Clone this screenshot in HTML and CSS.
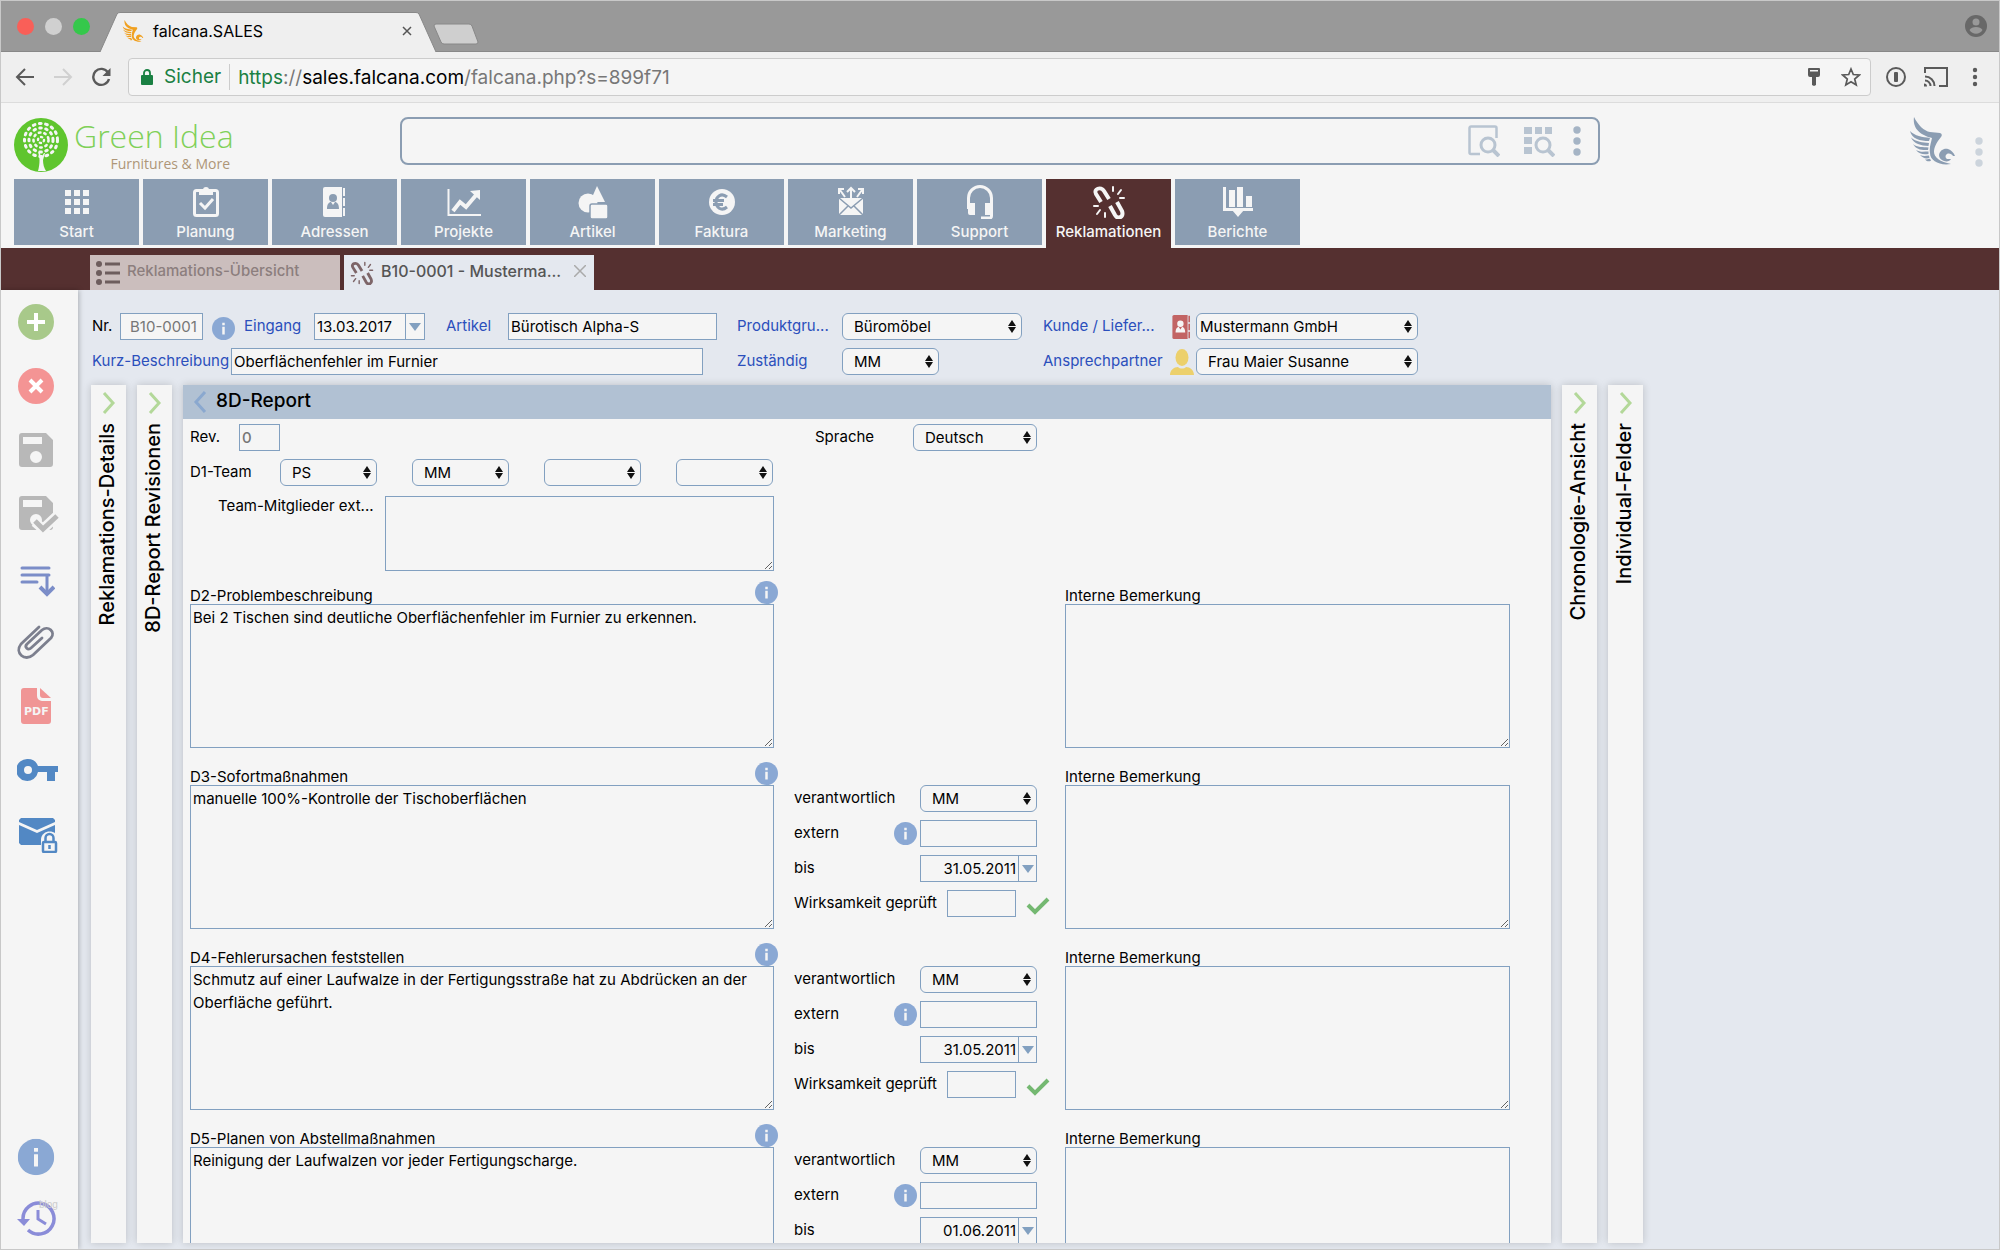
FILE: index.html
```html
<!DOCTYPE html>
<html lang="de">
<head>
    <meta charset="utf-8">
    <title>falcana.SALES</title>
    <link rel="stylesheet" href="styles.css">
</head>
<body>
    <!-- shared icons -->
    <svg class="defs" width="0" height="0">
        <symbol id="i-info" viewBox="0 0 24 24"><circle cx="12" cy="12" r="12"/><path fill="#f5f5f5" d="M10.700 6h2.600v2.600h-2.600zM10.700 10.200h2.600v8h-2.600z"/></symbol>
        <symbol id="i-falcon" viewBox="0 0 45 48"><path d="M4 0C8 8 14 14 20 15L30 16Q33 17 31 20C26 26 24 31 24 35C24 40 30 45 41 47C30 49 20 44 20 36C19 31 21 26 22 21C14 19 2 14 4 0z"/><path d="M0 14C5 19 12 20 20 21L19 24C10 24 2 22 0 14zM1 20.500C6 25 13 25.500 19 26L18.500 29C11 28.500 4 27 1 20.500zM3 27C7 30.500 13 30 18.500 30.500L18 33C12 33.500 6 32.500 3 27zM6 33c4 2.500 8 1.500 12.500 1.500l0 2.500c-5 1-9.500 0-12.500-4zM10 38c3 1.500 6 1 9 .5l.5 2.500c-4 1-6.500 0-9.500-3zM15 42.500c2 0 3-.5 5-.8l1 2c-2 1-4 1-6-1.200z"/><path d="M29 38C30 33 34 31 38 32C41 33 44 36 45 39L43 39C42 37 39 36 37 37C35 38 35 41 37 42L41 42C40 44 37 45 34 44C31 43 29 41 29 38z"/></symbol>
        <symbol id="i-link" viewBox="0 0 34 34"><g fill="none" stroke="currentColor" stroke-width="4"><path d="M17 14L12 6C9 1 1 4 4 9l5 8"/><path d="M18 21l5 9c3 5 9 2 7-4l-5-9"/></g><g stroke="currentColor" stroke-width="2" stroke-linecap="round"><path d="M21 2v4M29 5l-3 4M28 13h4M2 21h4M8 25l-3 4M13 28v4"/></g></symbol>
        <symbol id="i-contact" viewBox="0 0 24 30"><path d="M2 0h17v30H2a2 2 0 0 1-2-2V2a2 2 0 0 1 2-2z"/><path d="M20 1h2v8h-2zM20 11h2v8h-2zM20 21h2v8h-2z"/><g class="cut"><circle cx="10" cy="11" r="4"/><path d="M4 22c0-5 2-7 4-7l2 3 2-3c2 0 4 2 4 7z"/></g></symbol>
        <symbol id="i-disk" viewBox="0 0 34 34"><path fill-rule="evenodd" d="M3 0h24l7 7v24a3 3 0 0 1-3 3H3a3 3 0 0 1-3-3V3a3 3 0 0 1 3-3zM4 4v7h19V4zM17 18a6 6 0 1 0 0 12 6 6 0 0 0 0-12z"/></symbol>
        <symbol id="i-next" viewBox="0 0 14 22"><path fill="none" stroke="currentColor" stroke-width="3" d="M2 1l9 10-9 10"/></symbol>
        <symbol id="i-check" viewBox="0 0 24 18"><path fill="none" stroke="currentColor" stroke-width="4" d="M2 8l7 7L22 2"/></symbol>
    </svg>

    <!-- browser window -->
    <div class="titlebar">
        <span class="light red"></span><span class="light grey"></span><span class="light green"></span>
        <div class="browser-tab">
            <svg class="tab-shape" viewBox="0 0 336 40" preserveAspectRatio="none"><path fill="#efefef" stroke="#888" d="M0 40L17 2Q18 .5 20 .5H316Q318 .500 319 2L336 40"/></svg>
            <svg class="favicon"><use href="#i-falcon"/></svg>
            <span class="tab-name">falcana.SALES</span>
            <svg class="tab-close" viewBox="0 0 10 10"><path stroke="#555" stroke-width="1.500" d="M1 1l8 8M9 1L1 9"/></svg>
        </div>
        <svg class="new-tab" viewBox="0 0 46 22"><path fill="#cfcfcf" stroke="#888" d="M3 1h33q2 0 3 2l6 16q0 2-2 2H11q-2 0-3-2L1 3q0-2 2-2z"/></svg>
        <svg class="profile" viewBox="0 0 22 22"><circle cx="11" cy="11" r="11" fill="#686868"/><circle cx="11" cy="7" r="3.500" fill="#999"/><path fill="#999" d="M4.500 15c2-4 11-4 13 0-3 5-10 5-13 0z"/></svg>
    </div>
    <div class="toolbar">
        <svg class="tool-icon" viewBox="0 0 20 20"><path fill="none" stroke="#5a5a5a" stroke-width="2" d="M19 10H3M10 2l-8 8 8 8"/></svg>
        <svg class="tool-icon" viewBox="0 0 20 20"><path fill="none" stroke="#d0d0d0" stroke-width="2" d="M1 10h16M10 2l8 8-8 8"/></svg>
        <svg class="tool-icon" viewBox="0 0 20 20"><path fill="none" stroke="#5a5a5a" stroke-width="2.400" d="M17 5.500A8 8 0 1 0 18 12"/><path fill="#5a5a5a" d="M19.500 1v8h-8z"/></svg>
        <div class="omnibox">
            <svg class="lock" viewBox="0 0 12 16"><path fill="#1a8043" d="M1 6h10a1 1 0 0 1 1 1v8a1 1 0 0 1-1 1H1a1 1 0 0 1-1-1V7a1 1 0 0 1 1-1z"/><path fill="none" stroke="#1a8043" stroke-width="1.800" d="M3 7V4a3 3 0 0 1 6 0v3"/></svg>
            <span class="secure">Sicher</span>
            <span class="url"><span class="scheme">https</span>://<b>sales.falcana.com</b>/falcana.php?s=899f71</span>
            <svg class="box-icon" viewBox="0 0 20 20"><path fill="#5a5a5a" fill-rule="evenodd" d="M5 1h10a1 1 0 0 1 1 1v6a2 2 0 0 1-2 2h-2v8l-2 1-2-1v-8H6a2 2 0 0 1-2-2V2a1 1 0 0 1 1-1zM6 3v1.500h8V3z"/></svg>
            <svg class="box-icon" viewBox="0 0 20 20"><path fill="none" stroke="#5a5a5a" stroke-width="1.700" d="M10 2l2.300 5.500 6 .5-4.600 4 1.500 6-5.200-3.300L4.800 18l1.500-6-4.600-4 6-.5z"/></svg>
        </div>
        <svg class="tool-icon" viewBox="0 0 20 20"><circle cx="10" cy="10" r="9" fill="none" stroke="#5a5a5a" stroke-width="2"/><rect x="8" y="5" width="4" height="10" rx="1" fill="#5a5a5a"/></svg>
        <svg class="cast" viewBox="0 0 24 20"><path fill="none" stroke="#5a5a5a" stroke-width="2" d="M1 6V1h22v18h-8M1 9.500a9.500 9.500 0 0 1 9.500 9.500M1 13.500a5.500 5.500 0 0 1 5.500 5.500"/><path fill="#5a5a5a" d="M0 16.500a3 3 0 0 1 3 3H0z"/></svg>
        <svg class="dots-small" viewBox="0 0 6 20"><g fill="#5a5a5a"><circle cx="3" cy="3" r="2.200"/><circle cx="3" cy="10" r="2.200"/><circle cx="3" cy="17" r="2.200"/></g></svg>
    </div>

    <header>
        <div class="brand-row">
            <a class="logo" href="#">
                <svg class="tree" viewBox="0 0 54 54"><circle cx="27" cy="27" r="27" fill="#5fc52e"/><path fill="#f5f5f5" d="M24 53c2-8 2-13 0-19l2 1 1 5 3-5h1l-2 7c0 4 1 8 3 11z"/>
                    <g fill="none" stroke="#f5f5f5" stroke-linecap="round"><circle cx="27" cy="22" r="16.500" stroke-width="3" stroke-dasharray="1.800 4.500"/><circle cx="27" cy="22" r="12" stroke-width="3" stroke-dasharray="1.600 4.500"/><circle cx="27" cy="22" r="7.500" stroke-width="2.600" stroke-dasharray="1.500 4"/><circle cx="27" cy="22" r="3" stroke-width="2.400" stroke-dasharray="1.200 3.400"/></g></svg>
                <span class="wordmark"><span class="brand">Green Idea</span><span class="slogan">Furnitures &amp; More</span></span>
            </a>
            <div class="search">
                <input type="text" aria-label="Suche">
                <svg class="search-icon" viewBox="0 0 32 32"><path fill="none" stroke="#b8c4d1" stroke-width="2.500" d="M12 29H3a1.500 1.500 0 0 1-1.500-1.500V3A1.500 1.500 0 0 1 3 1.500h24A1.500 1.500 0 0 1 28.500 3v10"/><circle cx="20" cy="20" r="7" fill="none" stroke="#b8c4d1" stroke-width="3"/><path stroke="#b8c4d1" stroke-width="4" d="M25 25l6 6"/></svg>
                <svg class="search-icon" viewBox="0 0 32 32"><path fill="#b8c4d1" d="M1 2h8v7H1zM12 2h7v7h-7zM22 2h7v7h-7zM1 12h8v7H1zM1 22h8v7H1z"/><circle cx="20" cy="20" r="9" fill="#f5f5f5"/><circle cx="20" cy="20" r="7" fill="none" stroke="#b8c4d1" stroke-width="3"/><path stroke="#b8c4d1" stroke-width="4" d="M25 25l6 6"/></svg>
                <svg class="dots" viewBox="0 0 8 30"><g fill="#a5b4c5"><circle cx="4" cy="4" r="3.700"/><circle cx="4" cy="15" r="3.700"/><circle cx="4" cy="26" r="3.700"/></g></svg>
            </div>
            <svg class="falcon"><use href="#i-falcon"/></svg>
            <svg class="dots side" viewBox="0 0 8 30"><g fill="#ccd4dc"><circle cx="4" cy="4" r="3.700"/><circle cx="4" cy="15" r="3.700"/><circle cx="4" cy="26" r="3.700"/></g></svg>
        </div>
        <nav>
            <a href="#"><svg viewBox="0 0 34 34"><path d="M5 5h6v6H5zM14 5h6v6h-6zM23 5h6v6h-6zM5 14h6v6H5zM14 14h6v6h-6zM23 14h6v6h-6zM5 23h6v6H5zM14 23h6v6h-6zM23 23h6v6h-6z"/></svg>Start</a>
            <a href="#"><svg viewBox="0 0 34 34"><rect x="5.500" y="5.500" width="23" height="25" rx="2" fill="none" stroke="currentColor" stroke-width="3"/><path d="M10 5h4a3 3 0 0 1 6 0h4v5H10z"/><path fill="none" stroke="currentColor" stroke-width="3" d="M11 18l5 5 8-9"/></svg>Planung</a>
            <a href="#"><svg viewBox="-5 -2 34 34"><use href="#i-contact" width="24" height="30"/></svg>Adressen</a>
            <a href="#"><svg viewBox="0 0 34 34"><path fill="none" stroke="currentColor" stroke-width="2" d="M1.500 4v26H34"/><path fill="none" stroke="currentColor" stroke-width="4" d="M6 26l7-9 6 5L30 9"/><path d="M33 5v10L23 6z"/></svg>Projekte</a>
            <a href="#"><svg viewBox="0 0 34 34"><path d="M21 1l8 16H14z"/><circle cx="12" cy="18" r="9.500"/><rect x="14" y="19" width="18" height="15" rx="2" stroke="#8b9db2" stroke-width="1.500"/></svg>Artikel</a>
            <a href="#"><svg viewBox="0 0 34 34"><circle cx="17" cy="17" r="13"/><path fill="none" stroke="#8b9db2" stroke-width="3" d="M22 12c-6-5-11 0-11 5s5 10 11 5M8 15.500h11M8 19.500h10"/></svg>Faktura</a>
            <a href="#"><svg viewBox="0 0 34 34"><path d="M5 13h24v17H5z"/><path fill="none" stroke="#8b9db2" stroke-width="1.500" d="M5 13l12 10 12-10M5 30l9-9M29 30l-9-9"/><path fill="none" stroke="currentColor" stroke-width="2" d="M11 12L6 5M17 13V4M23 12l5-7M5 9V4h5M13 7l4-4 4 4M24 4h5v5"/></svg>Marketing</a>
            <a href="#"><svg viewBox="0 0 34 34"><path fill="none" stroke="currentColor" stroke-width="3" d="M5.500 24V13a11.500 11.500 0 0 1 23 0v18a2 2 0 0 1-2 2H18"/><path d="M5 18h7v12H7a2 2 0 0 1-2-2zM22 18h7v12h-7z"/></svg>Support</a>
            <a href="#" class="active"><svg viewBox="0 0 34 34"><use href="#i-link"/></svg>Reklamationen</a>
            <a href="#"><svg viewBox="0 0 34 34"><path fill="none" stroke="currentColor" stroke-width="3" d="M3.500 2v22.500H32"/><path d="M8 5h6v17H8zM16 2h6v20h-6zM25 11h6v11h-6zM11 25h12l-6 7z"/></svg>Berichte</a>
        </nav>
    </header>

    <div class="tab-band">
        <a class="doc-tab" href="#"><svg viewBox="0 0 24 24"><g fill="#6d5d5d"><circle cx="3" cy="3" r="3"/><circle cx="3" cy="12" r="3"/><circle cx="3" cy="21" r="3"/><path d="M9 1.500h15v3H9zM9 10.500h15v3H9zM9 19.500h15v3H9z"/></g></svg><span>Reklamations-Übersicht</span></a>
        <a class="doc-tab current" href="#"><svg viewBox="0 0 34 34"><use href="#i-link"/></svg><span>B10-0001 - Musterma...</span><svg class="x" viewBox="0 0 12 12"><path stroke="#aaa" stroke-width="1.500" d="M0 0l12 12M12 0L0 12"/></svg></a>
    </div>

    <div class="page">
        <aside>
            <button title="Neu"><svg viewBox="0 0 38 38"><circle cx="19" cy="19" r="18" fill="#a8c98a"/><path stroke="#fff" stroke-width="4" d="M19 10v18M10 19h18"/></svg></button>
            <button title="Löschen"><svg viewBox="0 0 38 38"><circle cx="19" cy="19" r="18" fill="#f49494"/><path stroke="#fff" stroke-width="4" d="M13 13l12 12M25 13L13 25"/></svg></button>
            <button title="Speichern"><svg viewBox="0 0 38 38" fill="#b8b8b8"><use href="#i-disk" x="2" y="2" width="34" height="34"/></svg></button>
            <button title="Speichern und schließen"><svg class="wide" viewBox="0 0 42 38" fill="#b8b8b8"><use href="#i-disk" x="2" y="1" width="34" height="34"/><path fill="none" stroke="#f5f5f5" stroke-width="10" d="M18 27l8 7 14-13"/><path fill="none" stroke="#b8b8b8" stroke-width="5" d="M18 26l8 8 14-13"/></svg></button>
            <button title="Sortieren"><svg viewBox="0 0 38 38"><path fill="none" stroke="#7b8dc8" stroke-width="3" stroke-linecap="round" d="M5 9h27M5 16h27M5 23h15M30 17v17"/><path fill="none" stroke="#7b8dc8" stroke-width="4" d="M23 28l7 7 7-7"/></svg></button>
            <button title="Anhang"><svg viewBox="0 0 38 38"><path fill="none" stroke="#7c7f8e" stroke-width="2.800" stroke-linecap="round" stroke-linejoin="round" d="M25 15L14 25c-3 3-7-1-4-4L25 7c6-5 14 2 9 8L16 32c-8 7-19-2-12-11L22 4"/></svg></button>
            <button title="PDF"><svg viewBox="0 0 38 38"><path fill="#f09595" d="M7 1h13v8a5 5 0 0 0 5 5h9v20a3 3 0 0 1-3 3H7a3 3 0 0 1-3-3V4a3 3 0 0 1 3-3z"/><path fill="#f09595" d="M23 1l11 10h-8a3 3 0 0 1-3-3z"/><text class="pdf" x="7" y="28">PDF</text></svg></button>
            <button title="Rechte"><svg class="wide" viewBox="0 0 42 38"><path fill="#5288c4" fill-rule="evenodd" d="M11 8a11 11 0 0 1 10 7h20v6h-3v9h-8v-9h-9a11 11 0 1 1-10-13zM11 15a4 4 0 1 0 0 8 4 4 0 0 0 0-8z"/></svg></button>
            <button title="E-Mail"><svg class="wide" viewBox="0 0 42 38"><path fill="#5288c4" d="M4 3h32l2 2v2L20 15 2 7V5zM2 10l18 8 18-8v20H4l-2-2z"/><path fill="#f5f5f5" d="M24 38V24c1-10 16-10 18 0v14z"/><rect x="26" y="27" width="13" height="10" rx="1" fill="none" stroke="#5288c4" stroke-width="2.500"/><path fill="none" stroke="#5288c4" stroke-width="2.500" d="M28.500 27v-4a4 4 0 0 1 8 0v4M32.500 30v4"/></svg></button>
            <button title="Info" class="push"><svg viewBox="-.500 -.500 25 25" fill="#8aa8d4"><use href="#i-info" width="24" height="24"/></svg></button>
            <button title="Verlauf" class="last"><svg class="wide" viewBox="0 0 42 38"><path fill="none" stroke="#8a8cd8" stroke-width="3.500" d="M6 19A15.500 15.500 0 1 1 11 30"/><path fill="#8a8cd8" d="M0 19h13l-6 7z"/><path fill="none" stroke="#8a8cd8" stroke-width="3" d="M21 10v9l8 5"/></svg><span class="blog">blog</span></button>
        </aside>

        <main>
            <form class="head-form">
                <div class="col-a">
                    <div class="line">
                        <label class="nr-label" for="nr">Nr.</label><input class="nr" id="nr" value="B10-0001" readonly>
                        <svg class="info"><use href="#i-info"/></svg>
                        <label class="blue eingang" for="eingang">Eingang</label>
                        <span class="date"><input id="eingang" value="13.03.2017"><button type="button" aria-label="Kalender"></button></span>
                        <label class="blue artikel" for="artikel">Artikel</label><input class="art" id="artikel" value="Bürotisch Alpha-S">
                    </div>
                    <div class="line">
                        <label class="blue kurz-label" for="kurz">Kurz-Beschreibung</label><input class="kurz" id="kurz" value="Oberflächenfehler im Furnier">
                    </div>
                </div>
                <div class="col-b">
                    <div class="line">
                        <label class="blue" for="produkt">Produktgru...</label>
                        <span class="select wide"><select id="produkt"><option>Büromöbel</option></select></span>
                    </div>
                    <div class="line">
                        <label class="blue" for="zust">Zuständig</label>
                        <span class="select"><select id="zust"><option>MM</option></select></span>
                    </div>
                </div>
                <div class="col-c">
                    <div class="line">
                        <label class="blue" for="kunde">Kunde / Liefer...</label>
                        <svg class="contact"><use href="#i-contact"/></svg>
                        <span class="select tight"><select id="kunde"><option>Mustermann GmbH</option></select></span>
                    </div>
                    <div class="line">
                        <label class="blue" for="partner">Ansprechpartner</label>
                        <svg class="person" viewBox="0 0 24 26"><ellipse cx="12" cy="8.500" rx="6.500" ry="8.500"/><path d="M0 26c0-5 4-8 8-8 2 2 6 2 8 0 4 0 8 3 8 8z"/></svg>
                        <span class="select"><select id="partner"><option>Frau Maier Susanne</option></select></span>
                    </div>
                </div>
            </form>

            <div class="panels">
                <section class="strip"><svg><use href="#i-next"/></svg><h2>Reklamations-Details</h2></section>
                <section class="strip"><svg><use href="#i-next"/></svg><h2>8D-Report Revisionen</h2></section>

                <section class="report">
                    <div class="report-title"><svg viewBox="0 0 14 22"><path fill="none" stroke="#8aa8cf" stroke-width="3" d="M12 1L3 11l9 10"/></svg><h1>8D-Report</h1></div>
                    <form class="report-form">
                        <div class="line">
                            <label class="rev-label" for="rev">Rev.</label><input class="rev" id="rev" value="0" readonly>
                            <label class="lang-label" for="sprache">Sprache</label>
                            <span class="select lang"><select id="sprache"><option>Deutsch</option></select></span>
                        </div>
                        <div class="line team">
                            <label for="team1">D1-Team</label>
                            <span class="select"><select id="team1"><option>PS</option></select></span>
                            <span class="select"><select aria-label="Team 2"><option>MM</option></select></span>
                            <span class="select"><select aria-label="Team 3"><option></option></select></span>
                            <span class="select"><select aria-label="Team 4"><option></option></select></span>
                        </div>
                        <div class="extern-team">
                            <label for="teamext">Team-Mitglieder ext...</label>
                            <textarea id="teamext"></textarea>
                        </div>

                        <div class="step">
                            <div class="text">
                                <div class="caption"><label for="d2">D2-Problembeschreibung</label><svg class="info"><use href="#i-info"/></svg></div>
                                <textarea id="d2">Bei 2 Tischen sind deutliche Oberflächenfehler im Furnier zu erkennen.</textarea>
                            </div>
                            <div class="resp"></div>
                            <div class="note">
                                <div class="caption"><label for="n2">Interne Bemerkung</label></div>
                                <textarea id="n2"></textarea>
                            </div>
                        </div>

                        <div class="step">
                            <div class="text">
                                <div class="caption"><label for="d3">D3-Sofortmaßnahmen</label><svg class="info"><use href="#i-info"/></svg></div>
                                <textarea id="d3">manuelle 100%-Kontrolle der Tischoberflächen</textarea>
                            </div>
                            <div class="resp">
                                <div class="line"><label for="v3">verantwortlich</label><span class="select"><select id="v3"><option>MM</option></select></span></div>
                                <div class="line"><label for="e3">extern</label><svg class="info"><use href="#i-info"/></svg><input id="e3"></div>
                                <div class="line"><label for="b3">bis</label><span class="date"><input id="b3" value="31.05.2011"><button type="button" aria-label="Kalender"></button></span></div>
                                <div class="line"><label class="checked" for="w3">Wirksamkeit geprüft</label><input class="sign" id="w3"><svg class="ok"><use href="#i-check"/></svg></div>
                            </div>
                            <div class="note">
                                <div class="caption"><label for="n3">Interne Bemerkung</label></div>
                                <textarea id="n3"></textarea>
                            </div>
                        </div>

                        <div class="step">
                            <div class="text">
                                <div class="caption"><label for="d4">D4-Fehlerursachen feststellen</label><svg class="info"><use href="#i-info"/></svg></div>
                                <textarea id="d4">Schmutz auf einer Laufwalze in der Fertigungsstraße hat zu Abdrücken an der Oberfläche geführt.</textarea>
                            </div>
                            <div class="resp">
                                <div class="line"><label for="v4">verantwortlich</label><span class="select"><select id="v4"><option>MM</option></select></span></div>
                                <div class="line"><label for="e4">extern</label><svg class="info"><use href="#i-info"/></svg><input id="e4"></div>
                                <div class="line"><label for="b4">bis</label><span class="date"><input id="b4" value="31.05.2011"><button type="button" aria-label="Kalender"></button></span></div>
                                <div class="line"><label class="checked" for="w4">Wirksamkeit geprüft</label><input class="sign" id="w4"><svg class="ok"><use href="#i-check"/></svg></div>
                            </div>
                            <div class="note">
                                <div class="caption"><label for="n4">Interne Bemerkung</label></div>
                                <textarea id="n4"></textarea>
                            </div>
                        </div>

                        <div class="step">
                            <div class="text">
                                <div class="caption"><label for="d5">D5-Planen von Abstellmaßnahmen</label><svg class="info"><use href="#i-info"/></svg></div>
                                <textarea id="d5">Reinigung der Laufwalzen vor jeder Fertigungscharge.</textarea>
                            </div>
                            <div class="resp">
                                <div class="line"><label for="v5">verantwortlich</label><span class="select"><select id="v5"><option>MM</option></select></span></div>
                                <div class="line"><label for="e5">extern</label><svg class="info"><use href="#i-info"/></svg><input id="e5"></div>
                                <div class="line"><label for="b5">bis</label><span class="date"><input id="b5" value="01.06.2011"><button type="button" aria-label="Kalender"></button></span></div>
                            </div>
                            <div class="note">
                                <div class="caption"><label for="n5">Interne Bemerkung</label></div>
                                <textarea id="n5"></textarea>
                            </div>
                        </div>
                    </form>
                </section>

                <section class="strip"><svg><use href="#i-next"/></svg><h2>Chronologie-Ansicht</h2></section>
                <section class="strip"><svg><use href="#i-next"/></svg><h2>Individual-Felder</h2></section>
            </div>
        </main>
    </div>
</body>
</html>
```
FILE: styles.css
```css
* {
    box-sizing: border-box;
}

body {
    margin: 0;
    height: 100vh;
    display: flex;
    flex-direction: column;
    overflow: hidden;
    border: 1px solid #c8c8c8;
    background-color: #f5f5f5;
    color: #000;
    font-family: Inter, "Open Sans", sans-serif;
    font-size: 15px;
}

svg {
    display: block;
    flex: none;
}

.defs {
    position: absolute;
}

a {
    text-decoration: none;
}

/* Browser title bar */
.titlebar {
    display: flex;
    align-items: center;
    height: 51px;
    padding: 0 12px 0 16px;
    background-color: #999;
    border-bottom: 1px solid #888;
}

.light {
    width: 17px;
    height: 17px;
    margin-right: 11px;
    border-radius: 50%;
}

.red { background-color: #f95f58; }
.grey { background-color: #d0d0d0; }
.green { background-color: #35c84b; }

.browser-tab {
    position: relative;
    display: flex;
    align-items: center;
    align-self: flex-end;
    width: 336px;
    height: 40px;
    margin-left: -1px;
    margin-bottom: -1px;
    padding: 0 24px 2px 22px;
}

.tab-shape {
    position: absolute;
    left: 0;
    top: 0;
    width: 100%;
    height: 100%;
}

.favicon {
    position: relative;
    width: 22px;
    height: 22px;
    fill: #f0a020;
}

.tab-name {
    position: relative;
    flex: 1;
    padding-left: 9px;
    font-size: 16px;
}

.tab-close {
    position: relative;
    width: 10px;
    height: 10px;
}

.new-tab {
    width: 46px;
    height: 22px;
    margin: 16px 0 0 -3px;
}

.profile {
    width: 22px;
    height: 22px;
    margin-left: auto;
}

/* Browser toolbar */
.toolbar {
    display: flex;
    align-items: center;
    gap: 18px;
    height: 51px;
    padding: 0 21px 0 14px;
    background-color: #efefef;
    border-bottom: 1px solid #dcdcdc;
}

.tool-icon {
    width: 20px;
    height: 20px;
}

.cast {
    width: 24px;
    height: 20px;
}

.dots-small {
    width: 6px;
    height: 20px;
    margin-left: 6px;
}

.omnibox {
    display: flex;
    align-items: center;
    flex: 1;
    height: 38px;
    margin-left: -1px;
    margin-right: -3px;
    padding: 0 9px 0 12px;
    border: 1px solid #ccc;
    border-radius: 4px;
    background-color: #f5f5f5;
    font-size: 19px;
}

.lock {
    width: 12px;
    height: 16px;
}

.secure {
    margin-left: 11px;
    padding-right: 8px;
    border-right: 1px solid #ccc;
    line-height: 26px;
    color: #1a8043;
}

.url {
    flex: 1;
    padding-left: 8px;
    color: #777;
}

.url .scheme {
    color: #1a8043;
}

.url b {
    font-weight: normal;
    color: #000;
}

.box-icon {
    width: 20px;
    height: 20px;
    margin-left: 17px;
}

/* Header with logo and search */
.brand-row {
    display: flex;
    align-items: flex-start;
    height: 76px;
    padding: 14px 16px 0 13px;
}

.logo {
    display: flex;
    width: 386px;
}

.tree {
    width: 54px;
    height: 54px;
    margin-top: 1px;
}

.wordmark {
    display: flex;
    flex-direction: column;
    width: 162px;
    padding-left: 6px;
    font-family: "Open Sans", "Noto Sans", sans-serif;
    white-space: nowrap;
}

.brand {
    font-size: 32px;
    line-height: 38px;
    font-weight: 300;
    color: #7fd058;
}

.slogan {
    align-self: flex-end;
    font-size: 14px;
    line-height: 18px;
    color: #ae9678;
}

.search {
    display: flex;
    align-items: center;
    width: 1200px;
    height: 48px;
    padding-right: 17px;
    border: 2px solid #8b9db2;
    border-radius: 8px;
}

.search input {
    flex: 1;
    border: none;
    background: none;
}

.search-icon {
    width: 32px;
    height: 32px;
    margin-right: 23px;
}

.dots {
    width: 8px;
    height: 30px;
}

.search .dots {
    margin-left: -5px;
}

.side {
    margin: 20px 0 0 20px;
}

.falcon {
    width: 45px;
    height: 48px;
    margin-left: auto;
    fill: #8b9db2;
}

/* Main navigation */
nav {
    display: flex;
    gap: 4px;
    height: 69px;
    padding-left: 13px;
    --cut: #8b9db2;
}

nav a {
    display: flex;
    flex-direction: column;
    align-items: center;
    width: 125px;
    height: 66px;
    padding-top: 6px;
    background-color: #8b9db2;
    color: #f5f5f5;
    fill: #f5f5f5;
    line-height: 20px;
    font-weight: 500;
}

nav svg {
    width: 34px;
    height: 34px;
    margin-bottom: 3px;
}

nav a.active {
    height: 69px;
    background-color: #553030;
}

.cut {
    fill: var(--cut);
}

/* Open documents */
.tab-band {
    display: flex;
    align-items: flex-end;
    gap: 4px;
    height: 42px;
    padding-left: 89px;
    background-color: #553030;
}

.doc-tab {
    display: flex;
    align-items: center;
    width: 250px;
    height: 35px;
    padding: 0 8px 4px 6px;
    background-color: #cbbebd;
    color: #8c7e7e;
    font-weight: 500;
}

.doc-tab svg {
    width: 24px;
    height: 24px;
    margin: 4px 7px 0 0;
}

.doc-tab.current {
    background-color: #e4e8ef;
    font-size: 16px;
    color: #555;
}

.doc-tab.current span {
    flex: 1;
    white-space: nowrap;
}

.doc-tab.current svg {
    color: #7d6568;
}

.doc-tab .x {
    width: 12px;
    height: 12px;
    margin: 0;
}

/* Page below the tabs */
.page {
    display: flex;
    flex: 1;
    min-height: 0;
    background-color: #e4e8ef;
}

aside {
    display: flex;
    flex-direction: column;
    align-items: flex-start;
    width: 77px;
    background-color: #f5f5f5;
    box-shadow: 1px 0 5px rgba(0, 0, 0, 0.25);
}

aside button {
    position: relative;
    width: 70px;
    height: 64px;
    padding: 0 0 0 16px;
    border: none;
    background: none;
}

aside svg {
    width: 38px;
    height: 38px;
}

aside svg.wide {
    width: 42px;
}

.push {
    margin-top: auto;
}

aside .last {
    height: 60px;
}

.pdf {
    font: bold 11px "DejaVu Sans", sans-serif;
    fill: #f5f5f5;
}

.blog {
    position: absolute;
    left: 38px;
    top: 10px;
    font-size: 10px;
    color: #ccc;
}

main {
    display: flex;
    flex-direction: column;
    flex: 1;
    min-width: 0;
    padding: 23px 0 6px 13px;
}

/* Form controls */
input,
select,
textarea {
    height: 27px;
    margin: 0;
    padding: 0 2px;
    border: 1px solid #82a0c0;
    border-radius: 0;
    background-color: #f5f5f5;
    font: inherit;
    color: #000;
    outline: none;
}

textarea {
    display: block;
    line-height: 23px;
    height: 144px;
    padding-top: 1px;
}

label {
    flex: none;
    white-space: nowrap;
    padding-bottom: 2px;
}

.blue {
    color: #2b4fbc;
}

.line {
    display: flex;
    align-items: center;
    height: 27px;
    margin-bottom: 8px;
}

.select {
    position: relative;
    width: 97px;
    height: 27px;
}

.select select {
    appearance: none;
    width: 100%;
    padding: 0 20px 0 11px;
    border-radius: 6px;
}

/* up and down arrow of the drop-down */
.select::before,
.select::after {
    content: "";
    position: absolute;
    right: 6px;
    border: 4px solid transparent;
    pointer-events: none;
}

.select::before {
    top: 3px;
    border-bottom: 6px solid #111;
}

.select::after {
    bottom: 3px;
    border-top: 6px solid #111;
}

.select.tight select {
    padding-left: 3px;
}

.date {
    display: flex;
    width: 111px;
    height: 27px;
}

.date input {
    width: 91px;
    border-right: none;
}

.date button {
    flex: 1;
    padding: 0;
    border: 1px solid #82a0c0;
    background: #f5f5f5;
}

.date button::before {
    content: "";
    display: block;
    width: 0;
    margin: 0 auto;
    border: 6px solid transparent;
    border-top: 8px solid #82a0c0;
    border-bottom: none;
}

.info {
    width: 23px;
    height: 23px;
    fill: #8aa8d4;
}

/* Record header */
.head-form {
    display: flex;
    height: 72px;
    padding-left: 1px;
}

.col-a {
    width: 645px;
}

.col-b {
    width: 306px;
}

.nr-label {
    width: 28px;
}

.nr {
    width: 83px;
    padding-left: 9px;
    color: #777;
}

.col-a .info {
    margin: 4px 9px 0 9px;
}

.eingang {
    width: 70px;
}

.artikel {
    width: 62px;
    margin-left: 21px;
}

.art {
    width: 209px;
}

.kurz-label {
    width: 139px;
}

.kurz {
    width: 472px;
}

.col-b label {
    width: 105px;
}

.select.wide {
    width: 180px;
}

.col-c label {
    width: 127px;
}

.col-c .select {
    width: 222px;
    margin-left: 2px;
}

.contact {
    width: 24px;
    height: 24px;
    fill: #c26464;
    --cut: #f5f5f5;
}

.person {
    width: 24px;
    height: 26px;
    fill: #ecd06c;
}

/* Panels */
.panels {
    display: flex;
    gap: 11px;
    flex: 1;
    min-height: 0;
}

.strip,
.report {
    background-color: #f5f5f5;
    box-shadow: 0 0 8px rgba(0, 0, 0, 0.18);
}

.strip {
    width: 35px;
    flex: none;
    padding-top: 7px;
}

.strip svg {
    width: 14px;
    height: 22px;
    margin: 0 0 9px 11px;
    color: #b3d899;
}

h1,
h2 {
    margin: 0;
    font-size: 19px;
    font-weight: 500;
}

.strip h2 {
    writing-mode: vertical-rl;
    transform: rotate(180deg);
    width: 35px;
    font-size: 20px;
    line-height: 32px;
    text-align: right;
    white-space: nowrap;
}

.report {
    width: 1368px;
    overflow: hidden;
}

.report-title {
    display: flex;
    align-items: center;
    height: 34px;
    padding-left: 10px;
    background-color: #b1c1d3;
}

.report-title svg {
    width: 14px;
    height: 22px;
}

.report-title h1 {
    padding: 0 0 4px 9px;
}

.report-form {
    padding: 5px 0 0 7px;
}

.rev-label {
    width: 49px;
}

.rev {
    width: 41px;
    font-weight: 500;
    color: #777;
}

.lang-label {
    width: 98px;
    margin-left: 535px;
}

.select.lang {
    width: 124px;
}

.team {
    gap: 35px;
    margin-bottom: 10px;
}

.team label {
    width: 55px;
}

.extern-team {
    display: flex;
    padding-left: 28px;
    margin-bottom: 10px;
}

.extern-team label {
    width: 167px;
}

.extern-team textarea {
    width: 389px;
    height: 75px;
}

.step {
    display: flex;
    height: 181px;
}

.text,
.text textarea {
    width: 584px;
}

.note textarea {
    width: 445px;
}

.caption {
    display: flex;
    align-items: flex-end;
    justify-content: space-between;
    height: 23px;
}

.caption label {
    padding: 0;
    line-height: 17px;
}

.caption .info {
    margin-right: -4px;
}

.resp {
    width: 291px;
    padding: 23px 0 0 20px;
}

.resp label {
    width: 126px;
}

.resp .select,
.resp input,
.resp .date {
    width: 117px;
}

.resp .info {
    margin: 0 3px 0 -26px;
}

.resp .date input {
    width: 98px;
    text-align: right;
}

.resp .checked {
    width: 153px;
}

.resp .sign {
    width: 69px;
}

.ok {
    width: 24px;
    height: 18px;
    margin: 5px 0 0 10px;
    color: #74b871;
}
```
